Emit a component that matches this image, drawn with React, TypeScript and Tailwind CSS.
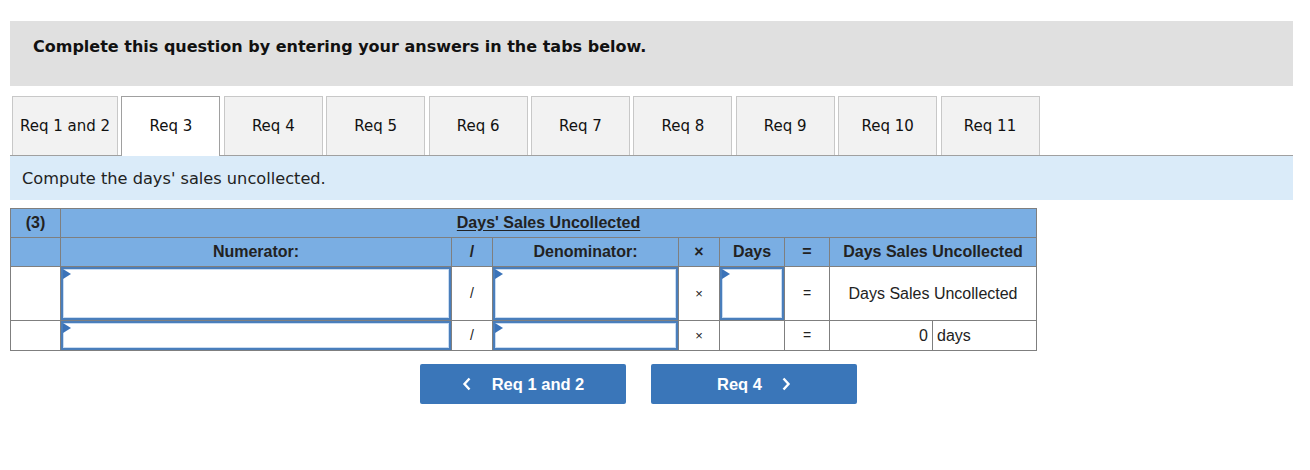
import React from "react";

const tabs = ["Req 1 and 2", "Req 3", "Req 4", "Req 5", "Req 6", "Req 7", "Req 8", "Req 9", "Req 10", "Req 11"];

const Corner = () => (
  <span className="absolute left-0 top-0 h-0 w-0 border-y-[5px] border-l-[8px] border-y-transparent border-l-[#3b73b9]"></span>
);

const InputBox = () => (
  <div className="relative h-full w-full border-2 border-[#4a7ebb] bg-white shadow-[inset_0_0_0_1px_#c9dcf2]">
    <Corner />
  </div>
);

const App = () => {
  return (
    <div className="min-h-[470px] bg-white px-[10px] pt-[21px] font-['Liberation_Sans',Arial,sans-serif] text-[#222]">
      <div className="w-[1283px]">
        {/* question banner */}
        <div className="h-[65px] bg-[#e0e0e0] px-[23px] pt-[14px]">
          <p className="font-['DejaVu_Sans',Verdana,sans-serif] text-[16px] font-bold leading-[24px] text-[#111]">
            Complete this question by entering your answers in the tabs below.
          </p>
        </div>

        {/* tabs */}
        <div className="mt-[10px] flex gap-[3.4px] border-b border-[#a0a0a0] pl-[2px]">
          {tabs.map((t, i) => (
            <div
              key={t}
              className={
                i === 1
                  ? "relative -mb-px flex h-[60px] w-[99px] items-center justify-center border border-b-0 border-[#a0a0a0] bg-white font-['DejaVu_Sans',Verdana,sans-serif] text-[15px] text-[#111]"
                  : "flex h-[59px] items-center justify-center border border-b-0 border-[#c8c8c8] bg-[#f2f2f2] font-['DejaVu_Sans',Verdana,sans-serif] text-[15px] text-[#111] " +
                    (i === 0 ? "w-[106px]" : "w-[99px]")
              }
            >
              {t}
            </div>
          ))}
        </div>

        {/* instruction band */}
        <div className="flex h-[44px] items-center bg-[#daebf9] px-[12px] pt-[2px]">
          <p className="font-['DejaVu_Sans',Verdana,sans-serif] text-[16.2px] text-[#222]">Compute the days' sales uncollected.</p>
        </div>
      </div>

      {/* worksheet */}
      <table className="mt-[8px] w-[1026px] table-fixed border-collapse border border-[#7f7f7f] text-[16px] text-[#222]">
        <colgroup>
          <col className="w-[50px]" />
          <col className="w-[391px]" />
          <col className="w-[41px]" />
          <col className="w-[186px]" />
          <col className="w-[41px]" />
          <col className="w-[65px]" />
          <col className="w-[45px]" />
          <col className="w-[103px]" />
          <col className="w-[104px]" />
        </colgroup>
        <tbody>
          <tr className="h-[29px] bg-[#7aaee3] font-bold">
            <td className="border border-[#7f7f7f] text-center">(3)</td>
            <td colSpan={8} className="border border-[#7f7f7f] text-center">
              <span className="underline underline-offset-2">Days' Sales Uncollected</span>
            </td>
          </tr>
          <tr className="h-[29px] bg-[#7aaee3] font-bold">
            <td className="border border-[#7f7f7f]"></td>
            <td className="border border-[#7f7f7f] text-center">Numerator:</td>
            <td className="border border-[#7f7f7f] text-center">/</td>
            <td className="border border-[#7f7f7f] text-center">Denominator:</td>
            <td className="border border-[#7f7f7f] text-center">×</td>
            <td className="border border-[#7f7f7f] text-center">Days</td>
            <td className="border border-[#7f7f7f] text-center">=</td>
            <td colSpan={2} className="border border-[#7f7f7f] text-center">Days Sales Uncollected</td>
          </tr>
          <tr className="h-[54px]">
            <td className="border border-[#7f7f7f]"></td>
            <td className="h-[54px] border border-[#7f7f7f] p-0">
              <InputBox />
            </td>
            <td className="border border-[#7f7f7f] text-center text-[14px]">/</td>
            <td className="h-[54px] border border-[#7f7f7f] p-0">
              <InputBox />
            </td>
            <td className="border border-[#7f7f7f] text-center text-[13px]">×</td>
            <td className="h-[54px] border border-[#7f7f7f] p-0">
              <InputBox />
            </td>
            <td className="border border-[#7f7f7f] text-center text-[14px]">=</td>
            <td colSpan={2} className="border border-[#7f7f7f] text-center">Days Sales Uncollected</td>
          </tr>
          <tr className="h-[30px]">
            <td className="border border-[#7f7f7f]"></td>
            <td className="h-[30px] border border-[#7f7f7f] p-0">
              <InputBox />
            </td>
            <td className="border border-[#7f7f7f] text-center text-[14px]">/</td>
            <td className="h-[30px] border border-[#7f7f7f] p-0">
              <InputBox />
            </td>
            <td className="border border-[#7f7f7f] text-center text-[13px]">×</td>
            <td className="border border-[#7f7f7f]"></td>
            <td className="border border-[#7f7f7f] text-center text-[14px]">=</td>
            <td className="border border-[#7f7f7f] pr-[4px] text-right">0</td>
            <td className="border border-[#7f7f7f] pl-[4px] text-left">days</td>
          </tr>
        </tbody>
      </table>

      {/* navigation */}
      <div className="mt-[13px] flex gap-[25px] pl-[410px]">
        <button className="flex h-[40px] w-[206px] items-center justify-center gap-[20px] rounded-[2px] bg-[#3a76b9] text-[16.5px] font-bold text-white">
          <svg width="10" height="14" viewBox="0 0 10 14" fill="none" stroke="white" strokeWidth="2.4">
            <path d="M7.5 1.5 2.5 7l5 5.5" />
          </svg>
          Req 1 and 2
        </button>
        <button className="flex h-[40px] w-[206px] items-center justify-center gap-[19px] rounded-[2px] bg-[#3a76b9] text-[16.5px] font-bold text-white">
          Req 4
          <svg width="10" height="14" viewBox="0 0 10 14" fill="none" stroke="white" strokeWidth="2.4">
            <path d="M2.5 1.5 7.5 7l-5 5.5" />
          </svg>
        </button>
      </div>
    </div>
  );
};

export default App;
